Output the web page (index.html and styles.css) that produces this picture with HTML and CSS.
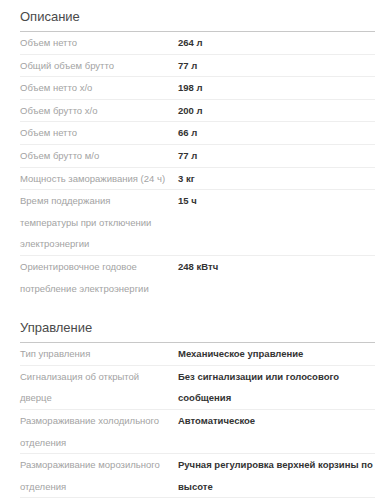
FILE: index.html
```html
<!DOCTYPE html>
<html lang="ru">
<head>
<meta charset="utf-8">
<link rel="stylesheet" href="styles.css">
</head>
<body>
<section class="spec">
  <h2 class="spec-title">Описание</h2>
  <div class="row"><div class="label">Объем нетто</div><div class="value">264 л</div></div>
  <div class="row"><div class="label">Общий объем брутто</div><div class="value">77 л</div></div>
  <div class="row"><div class="label">Объем нетто х/о</div><div class="value">198 л</div></div>
  <div class="row"><div class="label">Объем брутто х/о</div><div class="value">200 л</div></div>
  <div class="row"><div class="label">Объем нетто</div><div class="value">66 л</div></div>
  <div class="row"><div class="label">Объем брутто м/о</div><div class="value">77 л</div></div>
  <div class="row"><div class="label">Мощность замораживания (24 ч)</div><div class="value">3 кг</div></div>
  <div class="row"><div class="label">Время поддержания температуры при отключении электроэнергии</div><div class="value">15 ч</div></div>
  <div class="row last"><div class="label">Ориентировочное годовое потребление электроэнергии</div><div class="value">248 кВтч</div></div>
</section>
<section class="spec">
  <h2 class="spec-title">Управление</h2>
  <div class="row"><div class="label">Тип управления</div><div class="value">Механическое управление</div></div>
  <div class="row"><div class="label">Сигнализация об открытой дверце</div><div class="value">Без сигнализации или голосового сообщения</div></div>
  <div class="row"><div class="label">Размораживание холодильного отделения</div><div class="value">Автоматическое</div></div>
  <div class="row"><div class="label">Размораживание морозильного отделения</div><div class="value">Ручная регулировка верхней корзины по высоте</div></div>
</section>
</body>
</html>
```

FILE: styles.css
```css
html, body {
  margin: 0;
  padding: 0;
  background: #fff;
}
body {
  font-family: "Liberation Sans", Arial, sans-serif;
}
.spec {
  padding-left: 20px;
  margin-bottom: 11px;
}
.spec-title {
  margin: 0;
  padding: 6px 0 3px;
  font-size: 13px;
  line-height: 22px;
  font-weight: normal;
  color: #4a4a4a;
  border-bottom: 1px solid #c8c8c8;
}
.row {
  display: grid;
  grid-template-columns: 158px 1fr;
  border-bottom: 1px solid #eee;
  font-size: 9.5px;
  line-height: 21.6px;
}
.row.last {
  border-bottom-color: transparent;
}
.label {
  color: #a3a3a3;
  padding-right: 10px;
}
.value {
  color: #333;
  font-weight: bold;
}
```
